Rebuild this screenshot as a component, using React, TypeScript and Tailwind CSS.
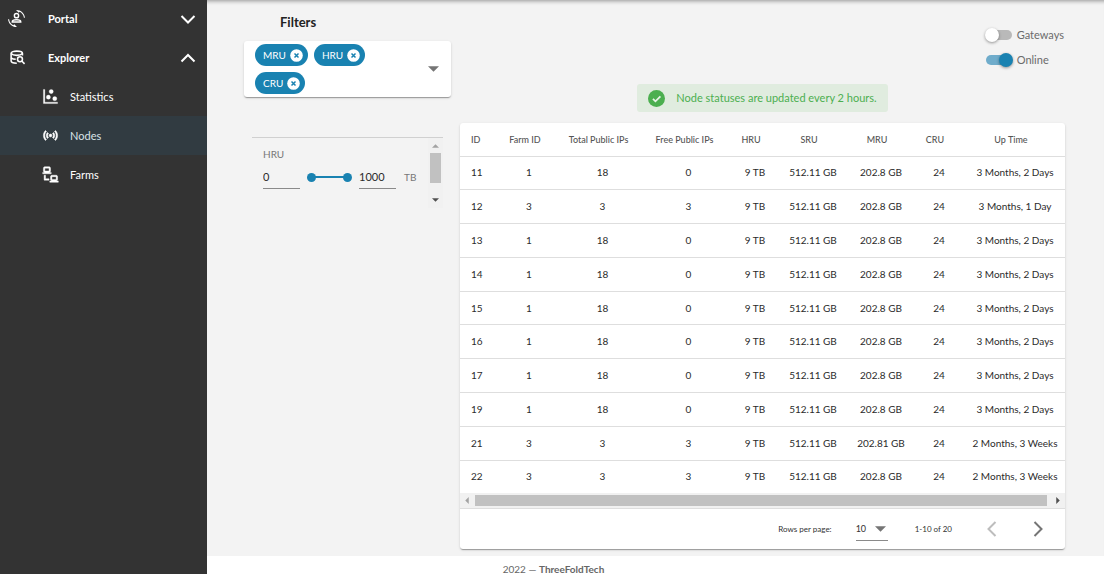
import { useState, type ReactNode } from "react";

const columns = [
  { label: "ID", width: "w-[39px]" },
  { label: "Farm ID", width: "w-[60px]" },
  { label: "Total Public IPs", width: "w-[87px]" },
  { label: "Free Public IPs", width: "w-[85px]" },
  { label: "HRU", width: "w-[48px]" },
  { label: "SRU", width: "w-[68px]" },
  { label: "MRU", width: "w-[68px]" },
  { label: "CRU", width: "w-[48px]" },
  { label: "Up Time", width: "w-[104px]" },
];

const nodes = [
  ["11", "1", "18", "0", "9 TB", "512.11 GB", "202.8 GB", "24", "3 Months, 2 Days"],
  ["12", "3", "3", "3", "9 TB", "512.11 GB", "202.8 GB", "24", "3 Months, 1 Day"],
  ["13", "1", "18", "0", "9 TB", "512.11 GB", "202.8 GB", "24", "3 Months, 2 Days"],
  ["14", "1", "18", "0", "9 TB", "512.11 GB", "202.8 GB", "24", "3 Months, 2 Days"],
  ["15", "1", "18", "0", "9 TB", "512.11 GB", "202.8 GB", "24", "3 Months, 2 Days"],
  ["16", "1", "18", "0", "9 TB", "512.11 GB", "202.8 GB", "24", "3 Months, 2 Days"],
  ["17", "1", "18", "0", "9 TB", "512.11 GB", "202.8 GB", "24", "3 Months, 2 Days"],
  ["19", "1", "18", "0", "9 TB", "512.11 GB", "202.8 GB", "24", "3 Months, 2 Days"],
  ["21", "3", "3", "3", "9 TB", "512.11 GB", "202.81 GB", "24", "2 Months, 3 Weeks"],
  ["22", "3", "3", "3", "9 TB", "512.11 GB", "202.8 GB", "24", "2 Months, 3 Weeks"],
];

function Icon({ className, children }: { className: string; children: ReactNode }) {
  return (
    <svg viewBox="0 0 24 24" fill="currentColor" className={className} aria-hidden="true">
      {children}
    </svg>
  );
}

function AccountConvertIcon() {
  return (
    <Icon className="size-[17px]">
      <path d="M7.5 21.5L8.85 20.16L12.66 23.97L12 24C5.71 24 .56 19.16 .05 13H1.55C1.91 16.76 4.25 19.94 7.5 21.5M16.5 2.5L15.15 3.84L11.34 .03L12 0C18.29 0 23.44 4.84 23.95 11H22.45C22.09 7.24 19.75 4.07 16.5 2.5" />
      <circle cx="12" cy="8" r="3" fill="none" stroke="currentColor" strokeWidth="2" />
      <path d="M6 17V16.500C6 14.400 9.500 13.700 12 13.700S18 14.400 18 16.500V17Z" fill="none" stroke="currentColor" strokeWidth="2" />
    </Icon>
  );
}

function DatabaseSearchIcon() {
  return (
    <Icon className="ml-px size-[17px]">
      <g fill="none" stroke="currentColor" strokeWidth="2.200">
        <path d="M19 9V6C19 4.300 15.400 3 11 3S3 4.300 3 6V17C3 18.700 6.600 20 11 20" />
        <path d="M3 6.500C4.500 8.200 7.500 9 11 9S17.500 8.200 19 6.500M3 12.500C4.500 13.800 6.500 14.500 9.500 14.500" />
        <circle cx="15.500" cy="14.500" r="3.500" />
        <path d="M18 17L22 21" />
      </g>
    </Icon>
  );
}

function ScatterIcon() {
  return (
    <Icon className="size-[17px]">
      <path
        stroke="currentColor"
        strokeWidth="0.4"
        d="M2,2H4V20H22V22H2V2M9,10A3,3 0 0,1 12,13A3,3 0 0,1 9,16A3,3 0 0,1 6,13A3,3 0 0,1 9,10M13,2A3,3 0 0,1 16,5A3,3 0 0,1 13,8A3,3 0 0,1 10,5A3,3 0 0,1 13,2M18,12A3,3 0 0,1 21,15A3,3 0 0,1 18,18A3,3 0 0,1 15,15A3,3 0 0,1 18,12Z"
      />
    </Icon>
  );
}

function AccessPointIcon() {
  return (
    <Icon className="size-[17px] text-white">
      <path
        stroke="currentColor"
        strokeWidth="0.7"
        d="M4.93,4.93C3.12,6.74 2,9.24 2,12C2,14.76 3.12,17.26 4.93,19.07L6.34,17.66C4.89,16.22 4,14.22 4,12C4,9.79 4.89,7.78 6.34,6.34L4.93,4.93M19.07,4.93L17.66,6.34C19.11,7.78 20,9.79 20,12C20,14.22 19.11,16.22 17.66,17.66L19.07,19.07C20.88,17.26 22,14.76 22,12C22,9.24 20.88,6.74 19.07,4.93M7.76,7.76C6.67,8.85 6,10.35 6,12C6,13.65 6.67,15.15 7.76,16.24L9.17,14.83C8.45,14.11 8,13.11 8,12C8,10.89 8.45,9.89 9.17,9.17L7.76,7.76M16.24,7.76L14.83,9.17C15.55,9.89 16,10.89 16,12C16,13.11 15.55,14.11 14.83,14.83L16.24,16.24C17.33,15.15 18,13.65 18,12C18,10.35 17.33,8.85 16.24,7.76M12,10A2,2 0 0,0 10,12A2,2 0 0,0 12,14A2,2 0 0,0 14,12A2,2 0 0,0 12,10Z"
      />
    </Icon>
  );
}

function LanIcon() {
  return (
    <Icon className="size-[17px]">
      <path
        stroke="currentColor"
        strokeWidth="0.6"
        d="M4,1C2.89,1 2,1.89 2,3V7C2,8.11 2.89,9 4,9H1V11H13V9H10C11.11,9 12,8.11 12,7V3C12,1.89 11.11,1 10,1H4M4,3H10V7H4V3M3,13V18L3,20H10V18H5V13H3M14,13C12.89,13 12,13.89 12,15V19C12,20.11 12.89,21 14,21H11V23H23V21H20C21.11,21 22,20.11 22,19V15C22,13.89 21.11,13 20,13H14M14,15H20V19H14V15Z"
      />
    </Icon>
  );
}

const chevrons = {
  down: "M1.500 5L8 11.500L14.500 5",
  up: "M1.500 11.500L8 5L14.500 11.500",
  left: "M11.500 1L4.500 8L11.500 15",
  right: "M4.500 1L11.500 8L4.500 15",
};

function Chevron({ to }: { to: keyof typeof chevrons }) {
  return (
    <svg viewBox="0 0 16 16" className="size-4 shrink-0" fill="none" stroke="currentColor" strokeWidth="2" aria-hidden="true">
      <path d={chevrons[to]} />
    </svg>
  );
}

function Triangle({ className, d }: { className: string; d: string }) {
  return (
    <svg viewBox="0 0 12 6" className={className} fill="currentColor" aria-hidden="true">
      <path d={d} />
    </svg>
  );
}

function Section({ icon, label, open, onClick }: { icon: ReactNode; label: string; open: boolean; onClick: () => void }) {
  return (
    <button type="button" aria-expanded={open} onClick={onClick} className="flex h-[39px] w-full items-center pr-[11px] pl-2 text-left font-bold">
      <span className="flex w-10">{icon}</span>
      <span className="flex-1 pt-[2px]">{label}</span>
      <Chevron to={open ? "up" : "down"} />
    </button>
  );
}

function NavLink({ icon, label, active }: { icon: ReactNode; label: string; active?: boolean }) {
  return (
    <a
      href={"#" + label.toLowerCase()}
      className={active ? "flex h-[39px] items-center gap-[11px] bg-[#313b41] pl-[42px] text-[#d9e3e8]" : "flex h-[39px] items-center gap-[11px] pl-[42px]"}
    >
      {icon}
      <span className="pt-[2px]">{label}</span>
    </a>
  );
}

function Chip({ label, onRemove }: { label: string; onRemove: () => void }) {
  return (
    <span className="flex h-[22px] items-center gap-1 rounded-full bg-[#1982b1] pr-[5px] pl-2 text-[10px] text-white">
      {label}
      <button type="button" aria-label={"Remove " + label} onClick={onRemove}>
        <svg viewBox="0 0 13 13" className="size-[13px]" aria-hidden="true">
          <circle cx="6.500" cy="6.500" r="6.300" fill="#fff" />
          <path d="M4.500 4.500L8.500 8.500M8.500 4.500L4.500 8.500" stroke="#1982b1" strokeWidth="1.500" />
        </svg>
      </button>
    </span>
  );
}

function Toggle({ label, initial }: { label: string; initial: boolean }) {
  const [on, setOn] = useState(initial);
  return (
    <label className="flex h-[25px] items-center gap-[5px] text-[11px] text-[#6b6b6b]">
      <input
        type="checkbox"
        role="switch"
        checked={on}
        onChange={() => setOn(!on)}
        className="relative h-[10px] w-[26px] appearance-none rounded-full bg-[#b9b9b9] before:absolute before:-top-[2px] before:-left-px before:size-[14px] before:rounded-full before:bg-white before:shadow-[0_1px_3px_rgba(0,0,0,0.4)] checked:bg-[#6faccb] checked:before:left-[13px] checked:before:bg-[#1982b1]"
      />
      <span className="pt-px">{label}</span>
    </label>
  );
}

const thumb =
  "pointer-events-none h-[10px] w-full appearance-none bg-transparent [grid-area:1/1] [&::-webkit-slider-thumb]:pointer-events-auto [&::-webkit-slider-thumb]:size-[9px] [&::-webkit-slider-thumb]:appearance-none [&::-webkit-slider-thumb]:rounded-full [&::-webkit-slider-thumb]:bg-[#1982b1]";

const numberField = "h-6 w-[37px] border-b border-[#8a8a8a] bg-transparent text-[11px] text-[#2b2b2b] outline-none";

function RangeFilter() {
  const [low, setLow] = useState(0);
  const [high, setHigh] = useState(1000);
  return (
    <div className="mx-2 mt-10 flex h-[71px] border-t border-[#d0d0d0]">
      <div className="flex-1 pt-[9px] pl-[11px] text-[#777]">
        <div className="text-[10px] leading-[14px]">HRU</div>
        <div className="mt-1 flex items-center">
          <input aria-label="Minimum HRU" value={low} onChange={(e) => setLow(Number(e.target.value) || 0)} className={numberField} />
          <div className="mx-[7px] grid w-[45px] items-center">
            <div className="mx-1 h-[2px] bg-[#1982b1] [grid-area:1/1]" />
            <input type="range" aria-label="Minimum HRU slider" min={0} max={1000} value={low} onChange={(e) => setLow(Math.min(Number(e.target.value), high))} className={thumb} />
            <input type="range" aria-label="Maximum HRU slider" min={0} max={1000} value={high} onChange={(e) => setHigh(Math.max(Number(e.target.value), low))} className={thumb} />
          </div>
          <input aria-label="Maximum HRU" value={high} onChange={(e) => setHigh(Number(e.target.value) || 0)} className={numberField} />
          <span className="ml-2 text-[10px]">TB</span>
        </div>
      </div>
      <div className="flex w-[15px] flex-col items-center bg-[#f1f1f1] py-[6px]">
        <Triangle className="h-1 w-[7px] text-[#a3a3a3]" d="M0 6L6 0L12 6Z" />
        <div className="mt-[5px] h-[30px] w-[11px] bg-[#c1c1c1]" />
        <Triangle className="mt-auto h-1 w-[7px] text-[#505050]" d="M0 0H12L6 6Z" />
      </div>
    </div>
  );
}

const cardShadow = "shadow-[0_2px_1px_-1px_rgba(0,0,0,0.2),0_1px_1px_rgba(0,0,0,0.14),0_1px_3px_rgba(0,0,0,0.12)]";

function NodesTable() {
  return (
    <section className={"mt-[11px] overflow-hidden rounded-[3px] bg-white " + cardShadow}>
      <div className="overflow-hidden">
        <table className="h-[370px] w-full min-w-[607px] table-fixed text-center text-[10px] text-[#2b2b2b]">
          <thead>
            <tr className="h-[33px] text-[9px] text-[#555]">
              {columns.map((c) => (
                <th key={c.label} scope="col" className={c.width + " pr-2 font-medium whitespace-nowrap first:pr-0 first:pl-[11px] first:text-left"}>
                  {c.label}
                </th>
              ))}
            </tr>
          </thead>
          <tbody>
            {nodes.map((row) => (
              <tr key={row[0]} className="border-t border-[#dedede]">
                {row.map((cell, i) => (
                  <td key={i} className="whitespace-nowrap first:pl-[11px] first:text-left">
                    {cell}
                  </td>
                ))}
              </tr>
            ))}
          </tbody>
        </table>
      </div>
      <div className="flex h-[15px] items-center bg-[#f1f1f1] px-[5px]">
        <svg viewBox="0 0 4 8" className="h-[7px] w-1" fill="#a3a3a3" aria-hidden="true">
          <path d="M4 0V8L0 4Z" />
        </svg>
        <div className="mr-[9px] ml-[6px] h-[11px] flex-1 bg-[#c1c1c1]" />
        <svg viewBox="0 0 4 8" className="h-[7px] w-1" fill="#505050" aria-hidden="true">
          <path d="M0 0V8L4 4Z" />
        </svg>
      </div>
      <div className="flex h-[41px] items-center justify-end border-t border-[#dedede] pr-[19px] text-[8px] text-[#333]">
        <label htmlFor="rows">Rows per page:</label>
        <div className="ml-6 grid w-8 items-center border-b border-[#8a8a8a]">
          <select id="rows" defaultValue="10" className="h-[22px] w-full appearance-none bg-transparent text-[9px] outline-none [grid-area:1/1]">
            <option>10</option>
            <option>20</option>
            <option>50</option>
          </select>
          <Triangle className="pointer-events-none mr-[2px] h-[6px] w-[11px] justify-self-end text-[#757575] [grid-area:1/1]" d="M0 0H12L6 6Z" />
        </div>
        <span className="ml-[27px]">1-10 of 20</span>
        <button type="button" aria-label="Previous page" disabled className="ml-8 text-[#bdbdbd]">
          <Chevron to="left" />
        </button>
        <button type="button" aria-label="Next page" className="ml-[30px] text-[#757575]">
          <Chevron to="right" />
        </button>
      </div>
    </section>
  );
}

export default function App() {
  const [chips, setChips] = useState(["MRU", "HRU", "CRU"]);
  const [portal, setPortal] = useState(false);
  const [explorer, setExplorer] = useState(true);
  return (
    <div className="flex min-h-screen font-[Lato,sans-serif]">
      <aside className="w-[207px] shrink-0 bg-[#333] text-[11px] text-white">
        <nav className="-mt-px">
          <Section icon={<AccountConvertIcon />} label="Portal" open={portal} onClick={() => setPortal(!portal)} />
          <Section icon={<DatabaseSearchIcon />} label="Explorer" open={explorer} onClick={() => setExplorer(!explorer)} />
          {explorer && (
            <>
              <NavLink icon={<ScatterIcon />} label="Statistics" />
              <NavLink icon={<AccessPointIcon />} label="Nodes" active />
              <NavLink icon={<LanIcon />} label="Farms" />
            </>
          )}
        </nav>
      </aside>
      <div className="flex min-w-0 flex-1 flex-col">
        <main className="flex flex-1 gap-[9px] bg-[#f3f3f3] pr-[39px] pb-[7px] pl-[37px] shadow-[inset_0_5px_4px_-4px_rgba(0,0,0,0.4)]">
          <div className="w-[207px] shrink-0 pt-[13px]">
            <h1 className="pl-9 text-[13px] leading-[18px] font-bold text-[#222]">Filters</h1>
            <div className={"mt-[10px] flex items-center rounded-[3px] bg-white py-[3px] pr-3 pl-[11px] " + cardShadow}>
              <div className="flex flex-1 flex-wrap gap-x-[6px] gap-y-[6px]">
                {chips.map((c) => (
                  <Chip key={c} label={c} onRemove={() => setChips(chips.filter((x) => x !== c))} />
                ))}
              </div>
              <button type="button" aria-label="Choose filters" className="ml-6">
                <Triangle className="h-[6px] w-[11px] text-[#757575]" d="M0 0H12L6 6Z" />
              </button>
            </div>
            <RangeFilter />
          </div>
          <div className="flex min-w-0 flex-1 flex-col pt-[22px]">
            <div className="flex flex-col self-end pr-px">
              <Toggle label="Gateways" initial={false} />
              <Toggle label="Online" initial />
            </div>
            <div role="status" className="mt-3 flex h-7 items-center gap-[11px] self-center rounded-[3px] bg-[#e0ecdf] px-[11px] text-[11px] text-[#4caf50]">
              <svg viewBox="0 0 24 24" className="size-[17px]" aria-hidden="true">
                <circle cx="12" cy="12" r="12" fill="#4caf50" />
                <path d="M7 12.500L10.500 16L17.500 9" fill="none" stroke="#e8f3e7" strokeWidth="2.500" />
              </svg>
              Node statuses are updated every 2 hours.
            </div>
            <NodesTable />
          </div>
        </main>
        <footer className="pt-2 pr-[204px] text-center text-[10px] leading-[10px] text-[#666]">
          <span>2022 — </span>
          <strong>ThreeFoldTech</strong>
        </footer>
      </div>
    </div>
  );
}
